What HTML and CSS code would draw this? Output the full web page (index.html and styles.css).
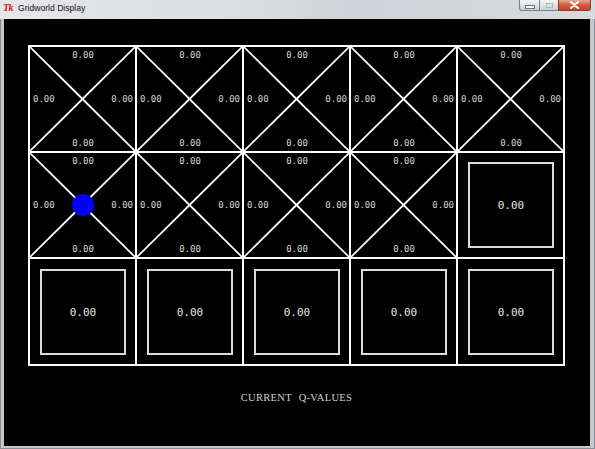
FILE: index.html
```html
<!DOCTYPE html>
<html>
<head>
<meta charset="utf-8">
<title>Gridworld Display</title>
<link rel="stylesheet" href="styles.css">
</head>
<body>
<div class="window">
  <div class="titlebar">
    <span class="tk-icon">Tk</span>
    <span class="title">Gridworld Display</span>
    <div class="controls">
      <div class="btn min"><span class="min-bar"></span></div>
      <div class="btn max"><span class="max-box"></span></div>
      <div class="btn close">
        <svg width="11" height="8" viewBox="0 0 11 8"><path d="M2 1 L9 7 M9 1 L2 7" stroke="#fff" stroke-width="2.2" stroke-linecap="round"/></svg>
      </div>
    </div>
  </div>
  <div class="frame">
    <div class="client">
      <div class="display">
        <div class="board">
          <div class="cell q"><span class="t">0.00</span><span class="l">0.00</span><span class="r">0.00</span><span class="b">0.00</span></div>
          <div class="cell q"><span class="t">0.00</span><span class="l">0.00</span><span class="r">0.00</span><span class="b">0.00</span></div>
          <div class="cell q"><span class="t">0.00</span><span class="l">0.00</span><span class="r">0.00</span><span class="b">0.00</span></div>
          <div class="cell q"><span class="t">0.00</span><span class="l">0.00</span><span class="r">0.00</span><span class="b">0.00</span></div>
          <div class="cell q"><span class="t">0.00</span><span class="l">0.00</span><span class="r">0.00</span><span class="b">0.00</span></div>

          <div class="cell q"><span class="t">0.00</span><span class="l">0.00</span><span class="agent"></span><span class="r">0.00</span><span class="b">0.00</span></div>
          <div class="cell q"><span class="t">0.00</span><span class="l">0.00</span><span class="r">0.00</span><span class="b">0.00</span></div>
          <div class="cell q"><span class="t">0.00</span><span class="l">0.00</span><span class="r">0.00</span><span class="b">0.00</span></div>
          <div class="cell q"><span class="t">0.00</span><span class="l">0.00</span><span class="r">0.00</span><span class="b">0.00</span></div>
          <div class="cell term up"><div class="square">0.00</div></div>

          <div class="cell term"><div class="square">0.00</div></div>
          <div class="cell term"><div class="square">0.00</div></div>
          <div class="cell term"><div class="square">0.00</div></div>
          <div class="cell term"><div class="square">0.00</div></div>
          <div class="cell term"><div class="square">0.00</div></div>
        </div>
        <div class="caption">CURRENT Q-VALUES</div>
      </div>
    </div>
  </div>
</div>
</body>
</html>
```
FILE: styles.css
```css
html, body {
  margin: 0;
  padding: 0;
  background: #c8cbcf;
}

.window {
  width: 595px;
  height: 449px;
  display: flex;
  flex-direction: column;
  background: #c4c7cb;
  box-shadow: inset 1px 0 #8c9096, inset -1px 0 #8c9096, inset 0 -1px #8c9096;
  box-sizing: border-box;
  overflow: hidden;
}

.titlebar {
  height: 19px;
  flex: none;
  display: flex;
  align-items: flex-start;
  padding-left: 3px;
  background: linear-gradient(to right, #e4e6e9 0%, #dcdee2 40%, #cfd2d6 60%, #d9dbdf 100%);
}

.tk-icon {
  font-family: "Liberation Serif", serif;
  font-style: italic;
  font-weight: bold;
  font-size: 10px;
  line-height: 16px;
  color: #d0201a;
  width: 12px;
  margin-right: 3px;
  letter-spacing: -0.5px;
}

.title {
  font-family: "Liberation Sans", sans-serif;
  font-size: 8.6px;
  line-height: 16px;
  color: #111;
}

.controls {
  display: flex;
  margin-left: auto;
  margin-right: 4px;
}

.btn {
  height: 11px;
  box-sizing: border-box;
  border: 1px solid #7b8189;
  border-top: none;
  display: flex;
  align-items: center;
  justify-content: center;
  background: linear-gradient(#f4f5f7, #dfe2e6 50%, #cdd1d6);
}

.min {
  width: 20px;
  border-right: none;
  border-bottom-left-radius: 3px;
}

.max {
  width: 19px;
  border-right: none;
}

.close {
  width: 33px;
  border-bottom-right-radius: 3px;
  background: linear-gradient(#e9a793, #d15a3c 50%, #c7432a);
  border-color: #8a3a2a;
}

.min-bar {
  width: 8px;
  height: 2px;
  margin-top: 3px;
  background: #fff;
  box-shadow: 0 0 0 1px #6d737b;
}

.max-box {
  width: 7px;
  height: 5px;
  box-sizing: border-box;
  border: 1px solid #b3b8bf;
}

.frame {
  flex: 1;
  display: flex;
  padding: 0 5px 3px 4px;
}

.client {
  flex: 1;
  background: #000;
  padding: 25px 0 0 24px;
}

.display {
  display: inline-flex;
  flex-direction: column;
}

.board {
  display: grid;
  grid-template-columns: repeat(5, 105px);
  grid-template-rows: 104px 104px 105px;
  gap: 2px;
  padding: 2px;
  background: #fff;
}

.cell {
  background-color: #000;
  box-sizing: border-box;
}

.q {
  display: grid;
  grid-template-columns: auto 1fr auto;
  grid-template-rows: auto 1fr auto;
  padding: 3px 2px 3px 3px;
  background-image:
    linear-gradient(to top right, transparent calc(50% - 1.4px), #fff calc(50% - 0.4px), #fff calc(50% + 0.4px), transparent calc(50% + 1.4px)),
    linear-gradient(to bottom right, transparent calc(50% - 1.4px), #fff calc(50% - 0.4px), #fff calc(50% + 0.4px), transparent calc(50% + 1.4px));
  font-family: "DejaVu Sans Mono", monospace;
  font-size: 9px;
  line-height: 10px;
  color: #d6d6d6;
}

.q .t {
  grid-column: 1 / 4;
  grid-row: 1;
  justify-self: center;
}

.q .b {
  grid-column: 1 / 4;
  grid-row: 3;
  justify-self: center;
}

.q .l {
  grid-column: 1;
  grid-row: 2;
  align-self: center;
}

.q .r {
  grid-column: 3;
  grid-row: 2;
  align-self: center;
}

.agent {
  grid-column: 2;
  grid-row: 2;
  align-self: center;
  justify-self: center;
  width: 22px;
  height: 22px;
  border-radius: 50%;
  background: #0000ff;
}

.term {
  padding: 10px 9px 8px 10px;
}

.term.up {
  padding-top: 9px;
}

.square {
  width: 86px;
  height: 86px;
  box-sizing: border-box;
  border: 2px solid #dcdcdc;
  display: flex;
  align-items: center;
  justify-content: center;
  font-family: "DejaVu Sans Mono", monospace;
  font-size: 11px;
  color: #e6e6e6;
}

.caption {
  margin-top: 26px;
  text-align: center;
  font-family: "Liberation Serif", serif;
  font-size: 10.5px;
  line-height: 12px;
  letter-spacing: 0.3px;
  word-spacing: 4px;
  color: #d2d2d2;
}
```
